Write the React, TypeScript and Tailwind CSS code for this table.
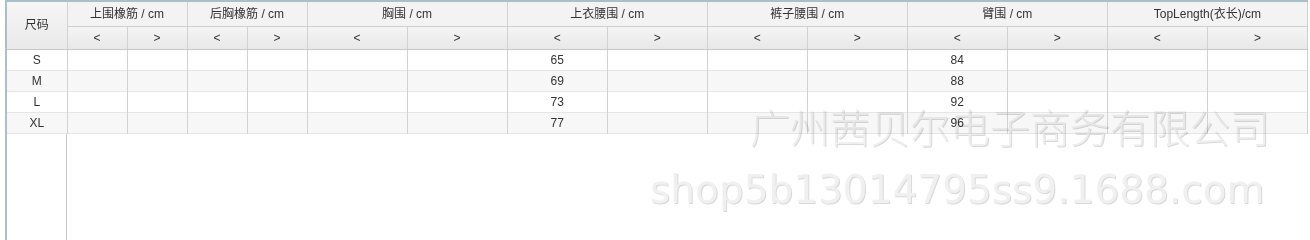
const groups = [
  { label: "上围橡筋 / cm", w: "w-[60px]" },
  { label: "后胸橡筋 / cm", w: "w-[60px]" },
  { label: "胸围 / cm", w: "w-[100px]" },
  { label: "上衣腰围 / cm", w: "w-[100px]" },
  { label: "裤子腰围 / cm", w: "w-[100px]" },
  { label: "臂围 / cm", w: "w-[100px]" },
  { label: "TopLength(衣长)/cm", w: "w-[100px]" },
];

// values by column index (0-based among the 14 sub columns)
const rows = [
  { size: "S", vals: { 6: "65", 10: "84" } as Record<number, string> },
  { size: "M", vals: { 6: "69", 10: "88" } as Record<number, string> },
  { size: "L", vals: { 6: "73", 10: "92" } as Record<number, string> },
  { size: "XL", vals: { 6: "77", 10: "96" } as Record<number, string> },
];

const cellBorder = "border-r border-[#d2d2d2]";

export default function App() {
  const subCols = groups.flatMap((g) => [g.w, g.w]);

  return (
    <div className="relative h-[240px] w-[1310px] overflow-hidden bg-white font-['Liberation_Sans','Noto_Sans_CJK_SC',sans-serif] text-[12px] text-[#333]">
      <div className="ml-[5px] flex h-full w-[1303px] flex-col border-l-2 border-t-2 border-[#a9bfca]">
        <table className="table-fixed border-collapse">
          <colgroup>
            <col className="w-[60px]" />
            {subCols.map((w, i) => (
              <col key={i} className={w} />
            ))}
          </colgroup>
          <thead>
            <tr className="h-[24px] bg-[#f3f3f3]">
              <th
                rowSpan={2}
                className={`${cellBorder} border-b border-b-[#c8c8c8] bg-gradient-to-b from-[#f6f6f6] to-[#e9e9e9] font-normal`}
              >
                尺码
              </th>
              {groups.map((g) => (
                <th
                  key={g.label}
                  colSpan={2}
                  className={`${cellBorder} border-b border-b-[#cfcfcf] font-normal`}
                >
                  {g.label}
                </th>
              ))}
            </tr>
            <tr className="h-[23px] bg-gradient-to-b from-[#f5f5f5] to-[#e8e8e8]">
              {subCols.map((_, i) => (
                <th
                  key={i}
                  className={`${cellBorder} border-b border-b-[#c8c8c8] font-normal`}
                >
                  {i % 2 === 0 ? "<" : ">"}
                </th>
              ))}
            </tr>
          </thead>
          <tbody>
            {rows.map((r, ri) => (
              <tr
                key={r.size}
                className={`h-[21px] border-b border-[#e6e6e6] ${ri % 2 === 1 ? "bg-[#f7f7f7]" : "bg-white"}`}
              >
                <td className={`${cellBorder} text-center`}>{r.size}</td>
                {subCols.map((_, i) => (
                  <td key={i} className={`${cellBorder} text-center`}>
                    {r.vals[i] ?? ""}
                  </td>
                ))}
              </tr>
            ))}
          </tbody>
        </table>
        <div className="flex flex-1">
          <div className="w-[60px] border-r border-[#c6c6c6]" />
        </div>
      </div>

      {/* watermark, multiplied so the table text shows through */}
      <div className="pointer-events-none absolute left-[750px] top-[106px] font-['Noto_Sans_CJK_SC',sans-serif] text-[40px] font-light leading-none text-[#efefef] mix-blend-multiply [text-shadow:1px_1px_0_#d9d9d9]">
        广州茜贝尔电子商务有限公司
      </div>
      <div className="pointer-events-none absolute left-[650px] top-[170px] font-['DejaVu_Sans',sans-serif] text-[39px] leading-none text-[#f0f0f0] mix-blend-multiply [text-shadow:1px_1px_0_#d9d9d9]">
        shop5b13014795ss9.1688.com
      </div>
    </div>
  );
}
